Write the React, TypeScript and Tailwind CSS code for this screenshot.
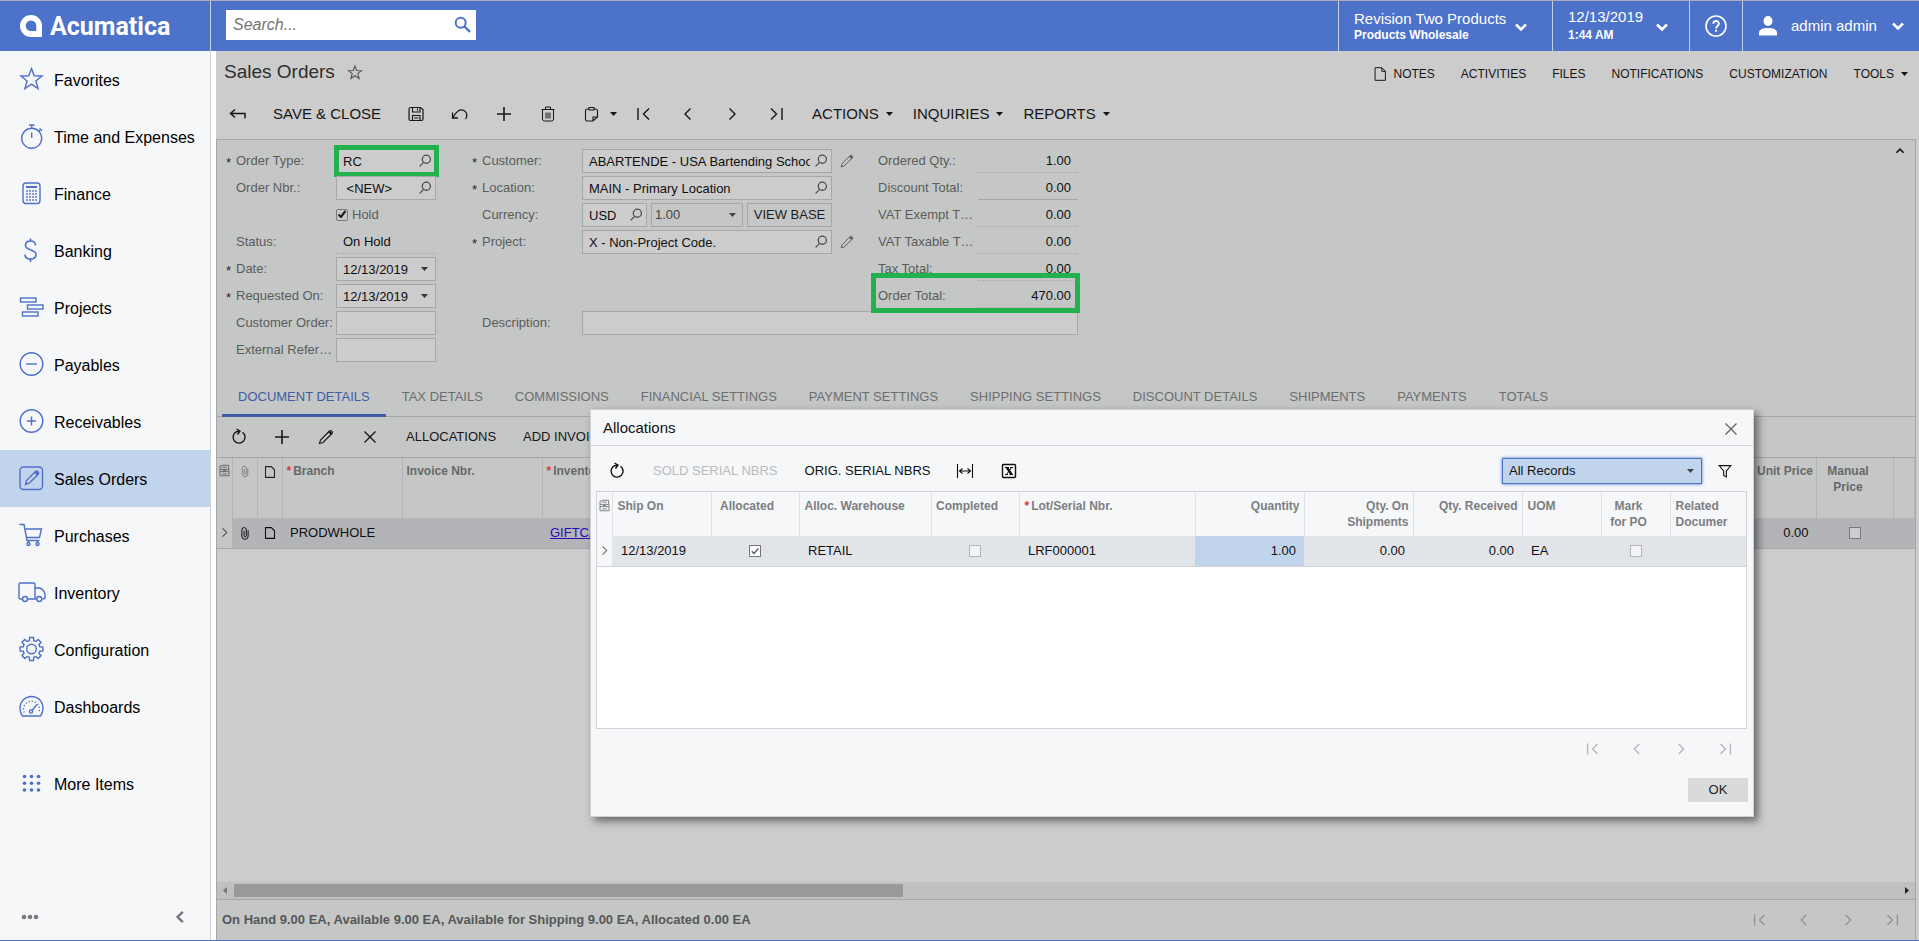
import type { ReactNode } from "react";

type IconProps = { className?: string };

function Caret({ className = "" }: IconProps) {
  return (
    <svg aria-hidden="true" className={`h-1 w-[7px] shrink-0 ${className}`} viewBox="0 0 7 4">
      <path d="M0 0h7L3.5 4z" fill="currentColor" />
    </svg>
  );
}

function LineIcon({ children, className = "size-5" }: { children: ReactNode; className?: string }) {
  return (
    <svg
      aria-hidden="true"
      className={`shrink-0 ${className}`}
      fill="none"
      stroke="currentColor"
      strokeWidth="1.4"
      viewBox="0 0 20 20"
    >
      {children}
    </svg>
  );
}

const icons = {
  back: <path d="M17 14.500V9.500H2.500M7 5.500L2.500 9.500l4.500 4" strokeWidth="1.500" />,
  save: (
    <>
      <path d="M5 3.500h9.500l2.500 2v9.500q0 1.500-1.500 1.500h-11q-1.500 0-1.500-1.500V5q0-1.500 2-1.500z" strokeWidth="1.200" />
      <path d="M6.500 3.500v4.500h7.500V3.500M11.500 4.500v2M6.500 16.500v-5h7.500v5M8 14h4.500" strokeWidth="1.100" />
    </>
  ),
  undo: <path d="M2.500 8.500v5.500h5.500M3 13.500C6 7.500 10 4.500 14 6.500c3.500 2 3.500 6 1.500 8.500" strokeWidth="1.300" />,
  plus: <path d="M10 3v14M3 10h14" strokeWidth="1.600" />,
  trash: (
    <path d="M4.500 6v9q0 2 2 2h7q2 0 2-2V6M3.500 5.500h13M7.500 5V3h5v2M8 8.500v6M10 8.500v6M12 8.500v6" strokeWidth="1" />
  ),
  clipboard: (
    <path d="M7 5H5.500q-2 0-2 2v8.500q0 1.500 1.500 1.500h6l4.500-4V7q0-2-2-2H12M7 6V3.500h5V6zM11 17v-4h4.500" strokeWidth="1.100" />
  ),
  first: <path d="M4 4v12M15 4.500L9.500 10l5.500 5.500" />,
  prev: <path d="M12.500 4.500L7 10l5.500 5.500" />,
  next: <path d="M7.500 4.500L13 10l-5.500 5.500" />,
  last: <path d="M16 4v12M5 4.500l5.500 5.500L5 15.500" />,
  reload: (
    <>
      <path d="M13.500 5.200a6 6 0 1 1-6-.5l3-.5" />
      <path d="M7.500 2l3.500 2.200-2.500 3.300" />
    </>
  ),
  pencil: (
    <>
      <path d="M3.500 16.500l1-3.500L13.500 4q1-1 2.300.2t.2 2.300L7 15.500z" strokeWidth="1.100" />
      <path d="M13 4.500l2.500 2.500" strokeWidth="2.200" />
    </>
  ),
  cross: <path d="M4.500 4.500l11 11M15.500 4.500l-11 11" />,
  fit: <path d="M2.500 3v14M17.500 3v14M4.500 10h11M7.500 7.500L4.500 10l3 2.500M12.500 7.500l3 2.500-3 2.500" strokeWidth="1.100" />,
  excel: (
    <>
      <rect height="13" rx="1" width="13" x="3.500" y="3.500" />
      <path d="M6 6.500h4M11 6.500h3M6 13.500h3M10.500 13.500H14" strokeWidth="1" />
      <path d="M8 6.500l4.500 7" strokeWidth="2.400" />
      <path d="M12.500 6.500l-5 7" strokeWidth="1" />
    </>
  ),
  filter: <path d="M3.500 4h13l-5 6v6.500l-3-1.500v-5z" strokeWidth="1.200" />,
  page: <path d="M4.500 3h7.500l4 4v10h-11.500zM12 3v4h4" strokeWidth="1.100" />,
  sheet: <path d="M5 4h6.500l3.500 3.500V16H5z" strokeWidth="1.200" />,
  clip: (
    <path d="M13.500 7v6.500a3.500 3.500 0 0 1-7 0V6.500a2.500 2.500 0 0 1 5 0V13a1.200 1.200 0 0 1-2.500 0V7.500" strokeWidth="1.100" />
  ),
  files: (
    <path d="M4 8.500V4h2.500l.5-1h8.500v5M4 8.500h12v3H4zM4 11.500V17h12v-5.500M7 5.500h6M7 14.500h6M8 10h4" strokeWidth="1.300" />
  ),
  lookup: (
    <>
      <circle cx="11.500" cy="8" r="4.500" />
      <path d="M8.500 11.500L4 16" />
    </>
  ),
};

type IconName = keyof typeof icons;

function gearPath(cx: number, cy: number) {
  const points: string[] = [];
  for (let i = 0; i < 8; i++) {
    const base = (i * Math.PI) / 4 - Math.PI / 2;
    for (const [offset, radius] of [[-0.26, 8.6], [-0.17, 11.6], [0.17, 11.6], [0.26, 8.6]]) {
      points.push(`${(cx + radius * Math.cos(base + offset)).toFixed(2)} ${(cy + radius * Math.sin(base + offset)).toFixed(2)}`);
    }
  }
  return `M${points.join("L")}Z`;
}

function dots(xs: number[], ys: number[], r: number) {
  return ys.flatMap((y) => xs.map((x) => <circle cx={x} cy={y} fill="currentColor" key={`${x}-${y}`} r={r} stroke="none" />));
}

const menu: { label: string; icon: ReactNode; active?: boolean }[] = [
  { label: "Favorites", icon: <path d="M13.500 2.500l2.700 7.200 7.900.3-6.200 4.900 2.200 7.700-6.600-4.400-6.600 4.400 2.200-7.700L2.900 10l7.900-.3z" /> },
  {
    label: "Time and Expenses",
    icon: (
      <>
        <circle cx="13.700" cy="15.300" r="10" />
        <path d="M11 2h5.500M13.700 2v3M20.800 8.500l2-2M21.500 5.500l2.500 2M13.700 9.500v5.500" />
      </>
    ),
  },
  {
    label: "Finance",
    icon: (
      <>
        <rect height="20.500" rx="3" width="17" x="5" y="3" />
        <path d="M8 7h11" strokeWidth="2" />
        {dots([9, 12, 15, 18], [11, 14, 17, 20], 0.9)}
      </>
    ),
  },
  { label: "Banking", icon: <path d="M17.500 8.500c0-3-2-4.500-5-4.500s-5 1.500-5 4.300c0 6 10.500 3.200 10.500 9.200 0 3-2.500 4.500-5.500 4.500S7 20.500 7 17.500M12.500 1.500V4M12.500 22v3" strokeWidth="1.600" /> },
  {
    label: "Projects",
    icon: (
      <>
        <rect height="4" width="15.500" x="2.500" y="4" />
        <rect height="4" width="15.500" x="9.500" y="11" />
        <rect height="4" width="15.500" x="4.500" y="18" />
      </>
    ),
  },
  { label: "Payables", icon: <><circle cx="13.500" cy="13" r="11.300" /><path d="M8 13h11" /></> },
  { label: "Receivables", icon: <><circle cx="13.500" cy="13" r="11.300" /><path d="M9 13h9M13.500 8.500v9" /></> },
  {
    label: "Sales Orders",
    active: true,
    icon: (
      <>
        <rect height="22.500" rx="3.500" width="22.500" x="2" y="2" />
        <path d="M7.500 19.500l1-4L17.500 6.500q1.300-1 2.500.2t.2 2.500L11.500 18z" />
        <path d="M17.500 7l2.500 2.500" strokeWidth="2.600" />
      </>
    ),
  },
  {
    label: "Purchases",
    icon: (
      <>
        <path d="M1.500 2.500H6L9 18.500h12.500M7 7h16.500l-2 8.500H8.500" />
        <circle cx="10.500" cy="22" r="1.500" />
        <circle cx="19.500" cy="22" r="1.500" />
        <path d="M10.500 20.500v-2M19.500 20.500v-2" />
      </>
    ),
  },
  {
    label: "Inventory",
    icon: (
      <>
        <path d="M4.500 20H2.500q-1.500 0-1.500-1.500V5.500Q1 4 2.500 4h13q1.500 0 1.500 1.500V20M9.500 20h9M17 9h4c3 0 6 3.500 6 7v2.500q0 1.500-2.500 1.500" />
        <circle cx="7" cy="20" r="2.500" />
        <circle cx="21.300" cy="20" r="2.500" />
      </>
    ),
  },
  { label: "Configuration", icon: <><path d={gearPath(13.500, 13)} /><circle cx="13.500" cy="13" r="4.800" /></> },
  {
    label: "Dashboards",
    icon: (
      <>
        <path d="M4.500 23Q2 20 2 15a11.500 11.500 0 0 1 23 0q0 5-2.500 8z" />
        <path d="M6.200 19.500a8 8 0 1 1 14.600 0" strokeDasharray="1.200 2" />
        <path d="M14 17.500l5-6" />
        <circle cx="13" cy="18.500" r="1.600" />
      </>
    ),
  },
];

function MenuIcon({ children }: { children: ReactNode }) {
  return (
    <svg aria-hidden="true" className="size-7 shrink-0 text-[#4f6fca]" fill="none" stroke="currentColor" strokeWidth="1.400" viewBox="0 0 28 28">
      {children}
    </svg>
  );
}

function Sidebar() {
  return (
    <nav className="flex w-[211px] shrink-0 flex-col border-r border-[#cfd1d6] bg-[#f5f7f9] text-base text-black">
      {menu.map((item) => (
        <a className={`flex h-[57px] items-center gap-2 pl-[18px] ${item.active ? "bg-[#c0d4ec]" : ""}`} href="#" key={item.label}>
          <MenuIcon>{item.icon}</MenuIcon>
          <span className="pt-0.5">{item.label}</span>
        </a>
      ))}
      <a className="mt-5 flex h-[57px] items-center gap-2 pl-[18px]" href="#">
        <MenuIcon>{dots([6.500, 13.500, 20.500], [6.500, 13.200, 20], 1.800)}</MenuIcon>
        <span className="pt-0.5">More Items</span>
      </a>
      <div className="mt-auto flex h-[46px] items-center justify-between pr-[22px] pl-5 text-[#77797c]">
        <button aria-label="More" type="button">
          <svg className="h-5 w-5" viewBox="0 0 20 20">
            {dots([4, 10, 16], [10], 2.300)}
          </svg>
        </button>
        <button aria-label="Collapse menu" type="button">
          <LineIcon className="size-4">
            <path d="M13.500 3.500L7 10l6.500 6.500" strokeWidth="3" />
          </LineIcon>
        </button>
      </div>
    </nav>
  );
}

function HeaderChevron() {
  return (
    <svg aria-hidden="true" className="h-2.5 w-3.5 shrink-0" fill="none" stroke="currentColor" strokeWidth="2.500" viewBox="0 0 14 10">
      <path d="M2 2.500l5 5 5-5" />
    </svg>
  );
}

function TopBar() {
  return (
    <header className="flex h-[51px] shrink-0 border-t border-[#a9adb5] bg-[#4d72c9] text-white">
      <div className="flex w-[211px] shrink-0 items-center gap-2 border-r border-[#c3cfec] pl-5">
        <svg aria-hidden="true" className="size-[22px]" viewBox="0 0 22 22">
          <path
            d="M11 0a11 11 0 0 1 11 11v11H11A11 11 0 0 1 11 0zM11 5.500a5.300 5.300 0 0 0 0 10.600h5.300V11A5.300 5.300 0 0 0 11 5.500z"
            fill="currentColor"
            fillRule="evenodd"
          />
        </svg>
        <span className="pt-0.5 font-[Roboto,sans-serif] text-[25px] leading-7 font-bold">Acumatica</span>
      </div>
      <div className="flex flex-1 items-start pt-[9px] pl-[15px]">
        <label className="flex h-[30px] w-[250px] items-center bg-white pr-[5px] pl-[7px] text-[#4d72c9]">
          <input
            aria-label="Search"
            className="min-w-0 flex-1 text-base text-black italic outline-none placeholder:text-[#757575]"
            placeholder="Search..."
            type="text"
          />
          <svg aria-hidden="true" className="mb-0.5 size-[17px]" fill="none" stroke="currentColor" viewBox="0 0 17 17">
            <circle cx="6.700" cy="6.700" r="5" strokeWidth="2" />
            <path d="M10.500 10.500L16 16" strokeWidth="2.400" />
          </svg>
        </label>
      </div>
      <button className="flex w-[214px] items-center gap-2 border-l border-[#c3cfec] pl-[15px] text-left" type="button">
        <span className="w-[152px] pt-0.5 whitespace-nowrap">
          <span className="block text-[15px] leading-4">Revision Two Products</span>
          <span className="block text-xs leading-4 font-bold">Products Wholesale</span>
        </span>
        <span className="pt-0.5"><HeaderChevron /></span>
      </button>
      <button className="flex w-[137px] items-center border-l border-[#c3cfec] pl-[15px] text-left" type="button">
        <span className="w-[87px]">
          <span className="block text-[15px] leading-[18px]">12/13/2019</span>
          <span className="block text-xs leading-[18px] font-bold">1:44 AM</span>
        </span>
        <span className="pt-0.5"><HeaderChevron /></span>
      </button>
      <button aria-label="Help" className="flex w-[53px] items-center justify-center border-l border-[#c3cfec]" type="button">
        <svg aria-hidden="true" className="size-[22px]" fill="none" stroke="currentColor" viewBox="0 0 22 22">
          <circle cx="11" cy="11" r="10" strokeWidth="1.600" />
          <path d="M8.300 8.800c0-3.700 5.600-3.600 5.600-.2 0 2.400-2.800 2.400-2.800 4.800M11.100 14.800v2" strokeWidth="1.900" />
        </svg>
      </button>
      <button className="flex w-[177px] items-center border-l border-[#c3cfec] pr-3.5 pl-4 text-[15px]" type="button">
        <svg aria-hidden="true" className="mr-3.5 h-5 w-[18px]" fill="currentColor" viewBox="0 0 18 20">
          <ellipse cx="9" cy="5" rx="4.500" ry="5" />
          <path d="M0 19.500v-3Q0 12 9 12t9 4.500v3z" />
        </svg>
        admin admin
        <span className="ml-auto"><HeaderChevron /></span>
      </button>
    </header>
  );
}

function IconButton({ icon, label, className = "h-8 w-11", iconClass = "size-5" }: { icon: IconName; label: string; className?: string; iconClass?: string }) {
  return (
    <button aria-label={label} className={`flex shrink-0 items-center justify-center ${className}`} type="button">
      <LineIcon className={iconClass}>{icons[icon]}</LineIcon>
    </button>
  );
}

function Pager() {
  return (
    <div className="flex">
      <IconButton icon="first" iconClass="size-[18px]" label="First page" />
      <IconButton icon="prev" iconClass="size-[18px]" label="Previous page" />
      <IconButton icon="next" iconClass="size-[18px]" label="Next page" />
      <IconButton icon="last" iconClass="size-[18px]" label="Last page" />
    </div>
  );
}

function ScreenHeader() {
  return (
    <>
      <div className="flex h-10 items-center pr-[11px] pl-2">
        <h1 className="pt-0.5 text-[19px] text-[#2e2e2e]">Sales Orders</h1>
        <button aria-label="Add to favorites" className="ml-3 pt-0.5 text-[#555]" type="button">
          <LineIcon className="size-4">
            <path d="M10 2.500l2.200 5.600 6 .3-4.700 3.700 1.600 5.900-5.100-3.400-5.100 3.400 1.600-5.900-4.700-3.700 6-.3z" />
          </LineIcon>
        </button>
        <div className="ml-auto flex gap-[26px] pt-1.5 text-xs text-[#161616]">
          <button className="flex items-center gap-1" type="button">
            <LineIcon className="size-[18px]">{icons.page}</LineIcon>
            NOTES
          </button>
          <button type="button">ACTIVITIES</button>
          <button type="button">FILES</button>
          <button type="button">NOTIFICATIONS</button>
          <button type="button">CUSTOMIZATION</button>
          <button className="flex items-center gap-[7px]" type="button">
            TOOLS <Caret />
          </button>
        </div>
      </div>
      <div className="flex h-12 items-center pb-0.5 text-[15px] text-[#161616]">
        <IconButton className="h-8 w-[43px]" icon="back" label="Back" />
        <button className="pr-[13px] pl-[14px]" type="button">SAVE &amp; CLOSE</button>
        <IconButton icon="save" label="Save" />
        <IconButton icon="undo" label="Cancel" />
        <IconButton icon="plus" label="Add" />
        <IconButton icon="trash" label="Delete" />
        <button aria-label="Clipboard" className="flex h-8 w-[52px] items-center gap-2 pl-3" type="button">
          <LineIcon>{icons.clipboard}</LineIcon>
          <Caret />
        </button>
        <IconButton icon="first" label="First record" />
        <IconButton icon="prev" label="Previous record" />
        <IconButton icon="next" label="Next record" />
        <IconButton icon="last" label="Last record" />
        {["ACTIONS", "INQUIRIES", "REPORTS"].map((label) => (
          <button className="flex items-center gap-[7px] pr-1.5 pl-[14px]" key={label} type="button">
            {label} <Caret />
          </button>
        ))}
      </div>
    </>
  );
}

function Row({ label, id, required, labelWidth = "w-[110px]", children }: { label?: string; id?: string; required?: boolean; labelWidth?: string; children: ReactNode }) {
  return (
    <div className="flex h-6 items-center">
      <label className={`flex shrink-0 ${labelWidth}`} htmlFor={id}>
        {labelWidth === "w-[110px]" && <span className="w-2.5 shrink-0 pt-1 leading-4 text-[#222]">{required ? "*" : ""}</span>}
        <span className="leading-5 whitespace-nowrap">{label}</span>
      </label>
      {children}
    </div>
  );
}

function Field({ id, value = "", width = "w-[100px]", kind, mark }: { id: string; value?: string; width?: string; kind?: "lookup" | "date"; mark?: boolean }) {
  return (
    <div className={`relative flex h-6 shrink-0 items-center border border-[#a6a8a8] bg-[#cccccc] ${width}`}>
      <input className={`h-5 min-w-0 flex-1 pt-px pl-1.5 text-[#0f0f0f] outline-none ${width === "w-[250px]" ? "mr-0.5" : ""}`} defaultValue={value} id={id} type="text" />
      {kind === "lookup" && (
        <button aria-label={`Look up ${id}`} className="pr-px text-[#4a4a4a]" type="button">
          <LineIcon className="size-[18px]">{icons.lookup}</LineIcon>
        </button>
      )}
      {kind === "date" && (
        <button aria-label={`Pick ${id}`} className="px-[7px] text-[#333]" type="button">
          <Caret />
        </button>
      )}
      {mark && <span className="pointer-events-none absolute -top-[5px] -right-1 -bottom-[5px] -left-[3px] border-[5px] border-[#22b14c]" />}
    </div>
  );
}

const totals = [
  { label: "Ordered Qty.:", value: "1.00" },
  { label: "Discount Total:", value: "0.00", solid: true },
  { label: "VAT Exempt T…", value: "0.00" },
  { label: "VAT Taxable T…", value: "0.00" },
  { label: "Tax Total:", value: "0.00" },
  { label: "Order Total:", value: "470.00", mark: true },
];

function OrderForm() {
  return (
    <section className="relative flex gap-9 pt-[9px] pb-[18px] pl-[9px] text-[13px] text-[#5a5c5c]">
      <div className="flex flex-col gap-[3px]">
        <Row id="order-type" label="Order Type:" required><Field id="order-type" kind="lookup" mark value="RC" /></Row>
        <Row id="order-nbr" label="Order Nbr.:"><Field id="order-nbr" kind="lookup" value=" <NEW>" /></Row>
        <Row>
          <label className="relative flex items-center gap-1">
            <input className="size-3 appearance-none rounded-[2px] border border-[#777] bg-[#c8c8c8]" defaultChecked type="checkbox" />
            <svg aria-hidden="true" className="absolute top-[5px] left-0.5 size-2" fill="none" stroke="#222" strokeWidth="2.200" viewBox="0 0 8 8">
              <path d="M.5 4.500L3 7 7.500.8" />
            </svg>
            Hold
          </label>
        </Row>
        <Row label="Status:"><output className="h-6 w-[100px] border-b border-dotted border-[#a6a8a8] pt-0.5 pl-[7px] text-[#0f0f0f]">On Hold</output></Row>
        <Row id="date" label="Date:" required><Field id="date" kind="date" value="12/13/2019" /></Row>
        <Row id="requested-on" label="Requested On:" required><Field id="requested-on" kind="date" value="12/13/2019" /></Row>
        <Row id="customer-order" label="Customer Order:"><Field id="customer-order" /></Row>
        <Row id="external-ref" label="External Refer…"><Field id="external-ref" /></Row>
      </div>

      <div className="flex flex-col gap-[3px]">
        <div className="flex gap-6">
          <div className="flex w-[382px] flex-col gap-[3px]">
            <Row id="customer" label="Customer:" required>
              <Field id="customer" kind="lookup" value="ABARTENDE - USA Bartending School" width="w-[250px]" />
              <IconButton className="ml-1.5 size-[18px]" icon="pencil" iconClass="size-[18px]" label="Edit customer" />
            </Row>
            <Row id="location" label="Location:" required>
              <Field id="location" kind="lookup" value="MAIN - Primary Location" width="w-[250px]" />
            </Row>
            <Row id="currency" label="Currency:">
              <div className="flex gap-1">
                <Field id="currency" kind="lookup" value="USD" width="w-[65px]" />
                <div className="relative flex w-[92px] items-center border border-[#a6a8a8]">
                  <select aria-label="Currency rate" className="w-full appearance-none pl-[3px] text-[#444] outline-none">
                    <option>1.00</option>
                  </select>
                  <Caret className="pointer-events-none absolute right-[6px] text-[#444]" />
                </div>
                <button className="h-6 w-[85px] border border-[#a6a8a8] whitespace-nowrap text-[#1d1d1d]" type="button">VIEW BASE</button>
              </div>
            </Row>
            <Row id="project" label="Project:" required>
              <Field id="project" kind="lookup" value="X - Non-Project Code." width="w-[250px]" />
              <IconButton className="ml-1.5 size-[18px]" icon="pencil" iconClass="size-[18px]" label="Edit project" />
            </Row>
          </div>
          <div className="flex flex-col gap-[3px]">
            {totals.map((total) => (
              <div className="relative" key={total.label}>
                <Row label={total.label} labelWidth="w-[100px]">
                  <output className={`h-6 w-[100px] border-b border-[#a6a8a8] pt-0.5 pr-[7px] text-right text-[#0f0f0f] ${total.solid ? "" : "border-dotted"}`}>
                    {total.value}
                  </output>
                </Row>
                {total.mark && <span className="absolute -top-[11px] -right-0.5 -bottom-[5px] -left-[7px] z-10 border-[5px] border-[#22b14c]" />}
              </div>
            ))}
          </div>
        </div>
        <Row id="description" label="Description:"><Field id="description" width="w-[496px]" /></Row>
      </div>

      <button aria-label="Collapse form" className="absolute top-[5px] right-[9px] text-[#111]" type="button">
        <LineIcon className="size-3"><path d="M4 13l6-6 6 6" strokeWidth="2.600" /></LineIcon>
      </button>
    </section>
  );
}

const tabs = [
  "DOCUMENT DETAILS",
  "TAX DETAILS",
  "COMMISSIONS",
  "FINANCIAL SETTINGS",
  "PAYMENT SETTINGS",
  "SHIPPING SETTINGS",
  "DISCOUNT DETAILS",
  "SHIPMENTS",
  "PAYMENTS",
  "TOTALS",
];

function Tabs() {
  return (
    <div className="flex h-[37px] border-b border-[#a6a8a8] pl-[5px] text-[13px] text-[#6c6e6e]" role="tablist">
      {tabs.map((tab, index) => (
        <button
          aria-selected={index === 0}
          className={`h-[37px] border-b-[3px] px-4 ${index === 0 ? "border-[#3f5ca5] text-[#3f5ca5]" : "border-transparent"}`}
          key={tab}
          role="tab"
          type="button"
        >
          {tab}
        </button>
      ))}
    </div>
  );
}

function Required() {
  return <span className="mr-0.5 text-[#d43a3a]">*</span>;
}

function CheckCell({ label, checked, dim }: { label: string; checked?: boolean; dim?: boolean }) {
  const tone = dim ? "border-[#7a7a7a] bg-[#cccccc]" : checked ? "border-[#777] bg-white" : "border-[#b5b5b5] bg-[#f4f4f4]";
  return (
    <span className="relative mx-auto flex size-3">
      <input aria-label={label} className={`size-3 appearance-none border ${tone}`} defaultChecked={checked} type="checkbox" />
      {checked && (
        <svg aria-hidden="true" className="pointer-events-none absolute inset-0.5 size-2" fill="none" stroke="#555" strokeWidth="1.300" viewBox="0 0 8 8">
          <path d="M.8 4.200L3 6.500 7.300 1.500" />
        </svg>
      )}
    </span>
  );
}

function DetailsGrid() {
  return (
    <table className="w-full table-fixed border-collapse text-left text-[13px]">
      <colgroup>
        <col className="w-[15px]" />
        <col className="w-[25px]" />
        <col className="w-[25px]" />
        <col className="w-[120px]" />
        <col className="w-[140px]" />
        <col />
        <col className="w-[109px]" />
        <col className="w-[77px]" />
        <col className="w-[21px]" />
      </colgroup>
      <thead className="bg-[#c5c7c6] text-xs leading-4 text-[#676969]">
        <tr className="h-[60px] align-top *:border-r *:border-[#b3b5b8] *:pt-[5px] *:font-bold">
          <th><LineIcon className="size-[15px]">{icons.files}</LineIcon></th>
          <th><LineIcon className="mx-auto size-4 text-[#777]">{icons.clip}</LineIcon></th>
          <th><LineIcon className="mx-auto size-[18px] text-[#222]">{icons.sheet}</LineIcon></th>
          <th className="pl-1"><Required />Branch</th>
          <th className="pl-1">Invoice Nbr.</th>
          <th className="pl-1"><Required />Inventory ID</th>
          <th className="pr-[3px] text-right">Unit Price</th>
          <th className="pr-[14px] text-center">Manual Price</th>
          <th className="border-r-0" />
        </tr>
      </thead>
      <tbody className="border-b border-[#a6a8a8] bg-[#b3b4b8] text-[#0f0f0f]">
        <tr className="h-[30px]">
          <td className="bg-[#c5c7c6] text-[#444]"><LineIcon className="size-[15px]">{icons.next}</LineIcon></td>
          <td><LineIcon className="mx-auto size-[18px]">{icons.clip}</LineIcon></td>
          <td><LineIcon className="mx-auto size-[18px]">{icons.sheet}</LineIcon></td>
          <td className="pl-2">PRODWHOLE</td>
          <td />
          <td className="pl-2"><a className="text-[#2a0bb5] underline" href="#">GIFTCARD</a></td>
          <td className="pr-2 text-right">0.00</td>
          <td><CheckCell dim label="Manual price" /></td>
          <td />
        </tr>
      </tbody>
    </table>
  );
}

function AllocationsGrid() {
  return (
    <div className="mr-1.5 ml-[5px] h-[238px] border border-[#d0d2d5] bg-white">
      <table className="w-full table-fixed border-collapse text-left text-[13px]">
        <colgroup>
          <col className="w-[15px]" />
          <col className="w-[99px]" />
          <col className="w-[88px]" />
          <col className="w-[132px]" />
          <col className="w-[88px]" />
          <col />
          <col className="w-[109px]" />
          <col className="w-[109px]" />
          <col className="w-[109px]" />
          <col className="w-[79px]" />
          <col className="w-[69px]" />
          <col className="w-[76px]" />
        </colgroup>
        <thead className="bg-[#f5f7f9] text-xs leading-4 text-[#7c7e81]">
          <tr className="h-11 align-top *:border-r *:border-[#dfe1e5] *:pt-1.5 *:font-bold *:last:border-r-0">
            <th><LineIcon className="size-[15px]">{icons.files}</LineIcon></th>
            <th className="pl-[5px]">Ship On</th>
            <th className="pr-4 text-center">Allocated</th>
            <th className="pl-[5px] whitespace-nowrap">Alloc. Warehouse</th>
            <th className="pr-4 text-center">Completed</th>
            <th className="pl-[5px]"><Required />Lot/Serial Nbr.</th>
            <th className="pr-1 text-right">Quantity</th>
            <th className="pr-1 text-right">Qty. On<br />Shipments</th>
            <th className="pr-1 text-right">Qty. Received</th>
            <th className="pl-[5px]">UOM</th>
            <th className="pr-[14px] text-center">Mark<br />for PO</th>
            <th className="pl-[5px]">Related<br />Documer</th>
          </tr>
        </thead>
        <tbody className="border-b border-[#d0d2d5] bg-[#e1e4e9] text-[#111]">
          <tr className="h-[30px]">
            <td className="bg-[#f5f7f9] text-[#666]"><LineIcon className="size-[15px]">{icons.next}</LineIcon></td>
            <td className="pl-[9px]">12/13/2019</td>
            <td><CheckCell checked label="Allocated" /></td>
            <td className="pl-[9px]">RETAIL</td>
            <td><CheckCell label="Completed" /></td>
            <td className="pl-[9px]">LRF000001</td>
            <td className="bg-[#c0d4ec] pr-2 text-right">1.00</td>
            <td className="pr-2 text-right">0.00</td>
            <td className="pr-2 text-right">0.00</td>
            <td className="pl-[9px]">EA</td>
            <td><CheckCell label="Mark for PO" /></td>
            <td />
          </tr>
        </tbody>
      </table>
    </div>
  );
}

function AllocationsDialog() {
  return (
    <div
      aria-label="Allocations"
      className="absolute top-[409px] left-[590px] z-20 w-[1164px] border border-[#cfd1d4] bg-[#f5f7f9] shadow-[4px_4px_8px_rgba(0,0,0,0.5)]"
      role="dialog"
    >
      <div className="flex h-9 items-center justify-between border-b border-[#d0d2d5] pt-0.5 pr-3 pl-3">
        <h2 className="text-[15px] text-[#111]">Allocations</h2>
        <IconButton className="size-5 text-[#666]" icon="cross" iconClass="size-5" label="Close" />
      </div>
      <div className="flex h-[45px] items-center pt-1 pr-[5px] pl-1 text-[13px] text-[#111]">
        <IconButton icon="reload" label="Refresh" />
        <button className="px-[14px] text-[#b9bbbe]" disabled type="button">SOLD SERIAL NBRS</button>
        <button className="px-[13px]" type="button">ORIG. SERIAL NBRS</button>
        <IconButton icon="fit" label="Fit to screen" />
        <IconButton icon="excel" label="Export to Excel" />
        <div className="relative ml-auto flex items-center">
          <select aria-label="Record filter" className="h-[26px] w-[200px] appearance-none border border-[#4d72c9] bg-[#c0d4ec] pl-1.5 shadow-[0_0_3px_#4d72c9] outline-none">
            <option>All Records</option>
          </select>
          <Caret className="pointer-events-none absolute right-2 text-[#444]" />
        </div>
        <IconButton className="h-8 w-[46px]" icon="filter" iconClass="size-[18px]" label="Filter settings" />
      </div>
      <AllocationsGrid />
      <div className="flex h-10 items-center justify-end pr-1.5 text-[#b3b5b8]">
        <Pager />
      </div>
      <div className="flex justify-end pt-[9px] pr-[5px] pb-[14px]">
        <button className="h-6 w-[60px] bg-[#d8dadc] text-[13px] text-[#222]" type="button">OK</button>
      </div>
    </div>
  );
}

function ScrollArrow({ d }: { d: string }) {
  return (
    <svg aria-hidden="true" className="h-[7px] w-1" viewBox="0 0 4 7">
      <path d={d} fill="currentColor" />
    </svg>
  );
}

export default function App() {
  return (
    <div className="relative flex h-screen flex-col overflow-hidden border-b border-[#4d72c9] bg-white font-['Liberation_Sans',Arial,sans-serif]">
      <TopBar />
      <div className="flex min-h-0 flex-1">
        <Sidebar />
        <main className="ml-[5px] flex min-w-0 flex-1 flex-col bg-[#cccccc]">
          <ScreenHeader />
          <div className="mr-[3px] flex min-h-0 flex-1 flex-col border-x border-t border-[#a6a8a8]">
            <div className="bg-[#c5c7c6]">
              <OrderForm />
              <Tabs />
              <div className="flex h-[41px] items-center border-b border-[#a6a8a8] text-[13px] text-[#161616]">
                <IconButton className="h-8 w-[43px]" icon="reload" label="Refresh rows" />
                <IconButton icon="plus" label="Add row" />
                <IconButton icon="pencil" label="Edit row" />
                <IconButton icon="cross" label="Delete row" />
                <button className="pr-[13px] pl-[14px]" type="button">ALLOCATIONS</button>
                <button className="px-[14px]" type="button">ADD INVOICE</button>
              </div>
            </div>
            <DetailsGrid />
            <div className="mt-auto flex h-[17px] items-center bg-[#c0c0c0] px-1.5 text-[#777]">
              <ScrollArrow d="M4 0v7L0 3.500z" />
              <div className="ml-[7px] h-[13px] w-[669px] bg-[#999]" />
              <span className="ml-auto text-[#222]"><ScrollArrow d="M0 0v7l4-3.500z" /></span>
            </div>
            <footer className="flex h-[41px] items-center justify-between border-t border-[#a6a8a8] bg-[#c5c7c6] pr-px pl-[5px] text-[#8f9191]">
              <p className="text-[13px] font-bold text-[#555757]">On Hand 9.00 EA, Available 9.00 EA, Available for Shipping 9.00 EA, Allocated 0.00 EA</p>
              <Pager />
            </footer>
          </div>
        </main>
      </div>
      <AllocationsDialog />
    </div>
  );
}
